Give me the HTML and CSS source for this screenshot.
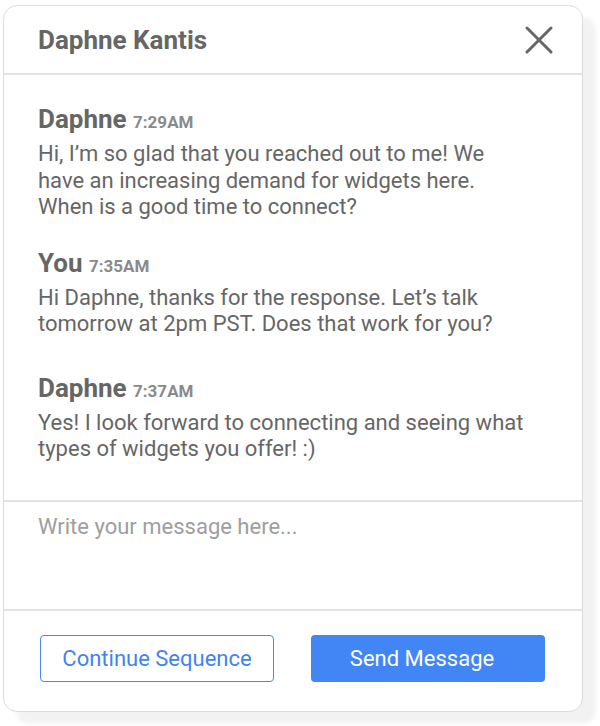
FILE: index.html
```html
<!DOCTYPE html>
<html lang="en">
<head>
<meta charset="UTF-8">
<meta name="viewport" content="width=device-width, initial-scale=1.0">
<title>Chat with Daphne Kantis</title>
<link rel="stylesheet" href="styles.css">
</head>
<body>
    <div class="chat">
        <div class="chat-header">
            <div class="chat-title">Daphne Kantis</div>
            <button class="close" aria-label="Close">
                <svg width="28" height="28" viewBox="0 0 28 28">
                    <path d="M2 2 L26 26 M26 2 L2 26" stroke="#666" stroke-width="3" stroke-linecap="round"/>
                </svg>
            </button>
        </div>

        <!-- Messages -->
        <div class="messages">
            <div class="message">
                <div class="sender">Daphne <span class="time">7:29AM</span></div>
                <div class="body">Hi, I’m so glad that you reached out to me! We have an increasing demand for widgets here. When is a good time to connect?</div>
            </div>
            <div class="message">
                <div class="sender">You <span class="time">7:35AM</span></div>
                <div class="body">Hi Daphne, thanks for the response. Let’s talk tomorrow at 2pm PST. Does that work for you?</div>
            </div>
            <div class="message later">
                <div class="sender">Daphne <span class="time">7:37AM</span></div>
                <div class="body">Yes! I look forward to connecting and seeing what types of widgets you offer! :)</div>
            </div>
        </div>

        <textarea class="compose" placeholder="Write your message here..."></textarea>

        <div class="actions">
            <button class="btn btn-outline">Continue Sequence</button>
            <button class="btn btn-primary">Send Message</button>
        </div>
    </div>
</body>
</html>
```

FILE: styles.css
```css
body {
    margin: 0;
    padding: 5px 17px 14px 3px;
    background: white;
    font-family: Roboto, "Liberation Sans", sans-serif;
}

.chat {
    width: 578px;
    height: 705px;
    border: 1px solid #dcdcdc;
    border-radius: 14px;
    background: white;
    box-shadow: 13px 12px 4px rgba(0, 0, 0, 0.05);
    display: flex;
    flex-direction: column;
}

.chat-header {
    height: 67px;
    border-bottom: 2px solid #e2e2e2;
    display: flex;
    align-items: center;
    justify-content: space-between;
    padding: 0 29px 0 34px;
    flex-shrink: 0;
}

.chat-title {
    font-size: 26px;
    font-weight: bold;
    color: #666;
    padding-top: 1px;
}

.close {
    border: none;
    background: none;
    padding: 0;
    width: 28px;
    height: 28px;
    cursor: pointer;
}

.messages {
    height: 427px;
    box-sizing: border-box;
    padding: 28px 50px 0 34px;
    border-bottom: 2px solid #e2e2e2;
    flex-shrink: 0;
}

.message {
    margin-bottom: 26px;
}

.message.later {
    margin-top: 34px;
}

.sender {
    font-size: 26px;
    font-weight: bold;
    color: #666;
    line-height: 32px;
}

.time {
    font-size: 17px;
    color: #8a8a8a;
}

.body {
    font-size: 22px;
    color: #666;
    line-height: 26.5px;
    margin-top: 3px;
}

.compose {
    height: 109px;
    flex-shrink: 0;
    border: none;
    border-bottom: 2px solid #e2e2e2;
    resize: none;
    padding: 12px 34px;
    font-family: inherit;
    font-size: 22px;
    color: #666;
    outline: none;
    box-sizing: border-box;
    background: transparent;
}

.compose::placeholder {
    color: #9e9e9e;
}

.actions {
    display: flex;
    gap: 37px;
    padding: 24px 36px 0 36px;
}

.btn {
    width: 234px;
    height: 47px;
    border-radius: 4px;
    font-family: inherit;
    font-size: 22px;
    cursor: pointer;
}

.btn-outline {
    background: white;
    color: #3f84ef;
    border: 1.5px solid #4a88ee;
}

.btn-primary {
    background: #4285f4;
    color: white;
    border: none;
    padding-right: 18px;
}
```
